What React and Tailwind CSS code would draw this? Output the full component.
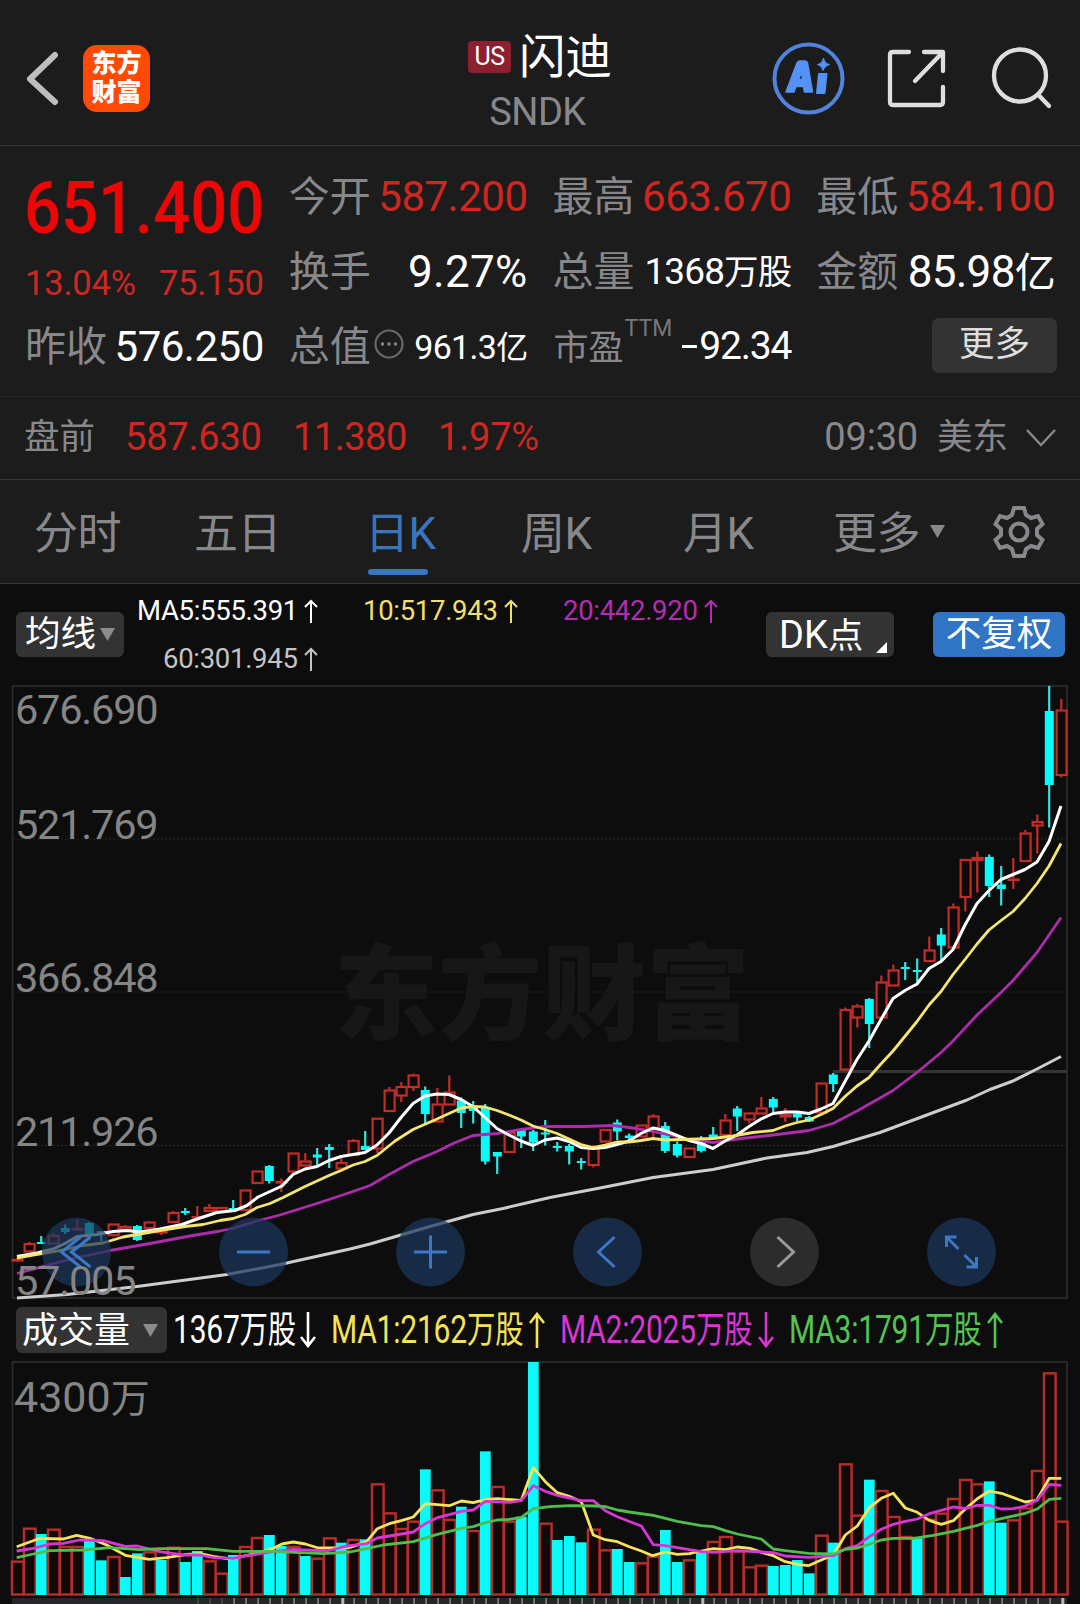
import React from 'react';

// [color, high, top, bottom, low] per trading day
const candles = [
  ['r', 1258, 1259, 1261, 1261], ['r', 1242, 1243, 1252, 1252], ['c', 1236, 1242, 1244, 1244], ['r', 1233, 1235, 1244, 1244],
  ['c', 1224.5, 1228, 1232, 1234], ['r', 1220, 1228, 1230, 1230], ['c', 1222, 1223, 1234, 1234], ['c', 1231, 1231, 1234, 1241],
  ['r', 1223.5, 1223.5, 1235.7, 1236], ['r', 1225, 1226, 1230, 1230], ['c', 1225, 1226, 1240, 1241], ['r', 1221, 1221.5, 1228.5, 1231],
  ['r', 1230, 1231, 1233, 1235], ['r', 1211, 1212, 1222.5, 1223], ['c', 1208, 1211, 1213, 1215], ['r', 1206, 1216, 1218, 1218],
  ['r', 1204, 1207, 1211.5, 1212], ['r', 1207, 1207, 1212, 1212], ['c', 1200, 1208, 1210, 1210], ['r', 1189.5, 1189.5, 1210.5, 1210.5],
  ['r', 1170.5, 1170.5, 1183.5, 1183.5], ['c', 1165, 1166, 1181, 1183.5], ['r', 1178.5, 1181, 1183, 1192], ['r', 1152.5, 1152.5, 1172, 1173],
  ['r', 1153, 1160.5, 1166, 1166], ['c', 1148, 1154.5, 1157.5, 1167], ['c', 1144, 1147, 1150, 1168], ['r', 1155, 1162, 1169, 1169],
  ['r', 1139, 1140, 1155.5, 1156], ['c', 1131, 1146, 1150, 1150], ['r', 1117.7, 1117.7, 1149, 1153], ['r', 1087, 1089.5, 1111.5, 1112],
  ['r', 1082, 1086, 1096, 1102], ['r', 1073.5, 1074.5, 1087.5, 1091], ['c', 1086.5, 1090, 1114, 1124], ['r', 1088, 1103.5, 1122, 1122],
  ['r', 1075.5, 1091.5, 1105, 1105], ['c', 1097.5, 1100.5, 1113, 1128], ['c', 1101, 1107, 1111, 1123.5], ['c', 1104, 1107, 1161.5, 1164.5],
  ['c', 1152, 1152, 1156.5, 1174], ['r', 1132, 1132, 1152.5, 1152.5], ['c', 1129, 1129, 1136.5, 1148], ['c', 1130, 1131.5, 1142.5, 1151],
  ['c', 1120, 1132.5, 1134.5, 1145.5], ['c', 1142, 1146, 1148, 1151.5], ['c', 1144, 1146, 1151.5, 1164.5], ['c', 1158, 1161, 1163, 1169.5],
  ['r', 1145, 1146, 1165.5, 1167.5], ['r', 1129, 1129, 1142, 1142], ['c', 1119.5, 1122.5, 1131.5, 1140], ['c', 1133.5, 1135.5, 1138, 1140],
  ['r', 1124.5, 1124.5, 1137, 1137], ['r', 1114, 1115.5, 1128.5, 1137], ['c', 1122, 1126, 1151, 1153], ['c', 1141.5, 1144, 1155.5, 1157.5],
  ['r', 1147.5, 1147.5, 1157.5, 1157.5], ['c', 1136, 1142, 1151, 1152.5], ['c', 1127, 1134.5, 1139, 1139], ['r', 1114, 1119.5, 1135.5, 1136],
  ['c', 1106, 1108.5, 1116.5, 1131], ['r', 1112, 1112.5, 1120, 1123.5], ['r', 1097, 1107.5, 1114, 1114], ['c', 1097, 1099, 1107.5, 1113],
  ['r', 1108, 1114, 1117, 1122], ['c', 1112, 1113.5, 1117.5, 1121], ['c', 1116, 1117, 1121.5, 1122], ['r', 1082.5, 1082.5, 1113, 1113],
  ['c', 1073, 1074.5, 1084, 1092], ['r', 1007.5, 1009, 1070, 1070], ['r', 1004, 1005.5, 1018, 1027.5], ['c', 998, 999, 1024, 1048],
  ['r', 975.5, 981.5, 1018, 1018], ['r', 964.5, 969.5, 986, 986], ['c', 962, 967, 969, 980], ['c', 958.5, 970, 972, 982],
  ['r', 936.5, 949.5, 961.5, 961.5], ['c', 928, 934.5, 945.5, 961], ['r', 903.5, 906.5, 948, 948], ['r', 859, 859, 897.5, 911.5],
  ['r', 851.5, 857, 860.5, 892.5], ['c', 854.5, 857, 886, 897], ['c', 866, 884.5, 889, 905.5], ['r', 858, 878.5, 880.5, 889],
  ['r', 830, 832.5, 861.5, 861.5], ['r', 814.5, 821, 826, 853.5], ['c', 686, 711, 785, 827.5], ['r', 699, 709.5, 775.5, 777.5],
];

const ma5 = '17,1256.5 37,1253 53,1249 65,1243.5 77,1236.5 97,1234.5 113,1231.5 127,1230.5 140,1232 160,1229 182,1224.5 200,1218 217,1212.5 235,1210.5 247,1205.5 258,1197 270,1191.5 282,1186 293,1174.5 305,1169 317,1166.5 329,1160.5 341,1156.5 353,1154.5 365,1152.5 377,1145 389,1133 401,1117.5 413,1103.5 425,1096 437,1094 449,1094.5 461,1099.5 473,1106.5 485,1117.5 497,1128.5 509,1135 521,1141 533,1145.5 545,1140 557,1138 569,1141.5 581,1147.5 593,1148.5 605,1147.5 617,1144.5 629,1141 641,1133.5 653,1128 665,1130.5 677,1135.5 689,1140.5 701,1143.5 713,1148.5 725,1141 737,1135 749,1126.5 761,1119 773,1113.5 785,1112 797,1112 809,1113.5 821,1109 833,1103.5 845,1081.5 857,1059.5 869,1041 881,1019.5 893,998.5 905,990.5 917,984 929,968.5 941,961.5 953,949.5 965,925 977,903.5 989,890.5 1001,879.5 1013,874.5 1025,869.5 1037,862 1049,841.5 1061,806';
const ma10 = '17,1258 33,1255 63,1250 83,1245.5 103,1243 123,1237 137,1234.5 160,1230.5 185,1226.5 203,1224.5 220,1220.5 233,1218.5 245,1214.5 257,1207.5 270,1203.5 283,1197.5 305,1186.5 329,1175.5 341,1170.5 353,1165 365,1161.5 377,1155.5 395,1141 413,1129.5 437,1119 461,1108 473,1106.5 485,1107 497,1110.5 509,1115 521,1120 533,1126 545,1129.5 557,1133.5 569,1139 581,1144.5 593,1147.5 605,1145 617,1142 629,1142 641,1140.5 653,1138.5 665,1140 713,1138.5 733,1136 753,1132.5 773,1130.5 785,1126 797,1122.5 809,1120 821,1114.5 833,1108.5 845,1096.5 857,1086 869,1077.5 880,1065 893,1051 917,1021.5 929,1005 941,991.5 953,974.5 965,959.5 977,944 989,930 1001,920.5 1013,911.5 1025,898.5 1037,883.5 1049,866 1061,843.5';
const ma20 = '17,1273.5 67,1260 110,1250.5 150,1243.5 190,1236 220,1231 233,1228.5 257,1221 280,1215 320,1202.5 350,1192.5 370,1185.5 389,1174.5 413,1161.5 437,1151.5 453,1143.5 473,1135.5 497,1133.5 521,1129.5 545,1126.5 583,1126.5 613,1125.5 633,1128 650,1131 665,1134 689,1139.5 713,1142.5 737,1139 773,1135 809,1130.5 833,1123.5 857,1111 880,1098 893,1090.5 917,1072.5 941,1052.5 953,1041 977,1015 1001,992.5 1013,980.5 1037,952.5 1061,917.5';
const ma60 = '17,1298 67,1294.5 137,1286.5 227,1274.5 280,1264.5 350,1249 370,1244 430,1226.5 473,1214.5 503,1208.5 550,1197.5 600,1188 653,1177.5 713,1169.5 767,1158 807,1152.5 833,1146.5 880,1132.5 967,1100 990,1089.5 1013,1081 1037,1069 1061,1056.5';

// volume bars: [color, top], the scale is 3 units per pixel and the base sits at 915
const volumes = [
  ['r', 812], ['r', 713], ['c', 732], ['r', 716], ['r', 768], ['r', 768], ['c', 752], ['c', 811], ['r', 798], ['c', 861], ['c', 790],
  ['r', 784], ['c', 810], ['r', 770], ['c', 816], ['c', 783], ['r', 811], ['r', 848], ['c', 795], ['r', 768], ['r', 741], ['c', 735],
  ['c', 768], ['r', 768], ['c', 798], ['r', 803], ['r', 742], ['c', 758], ['r', 747], ['c', 748], ['r', 580], ['r', 667], ['r', 714],
  ['r', 692], ['c', 538], ['r', 598], ['r', 687], ['c', 650], ['r', 720], ['c', 484], ['r', 588], ['r', 692], ['c', 680], ['c', 216],
  ['r', 698], ['c', 750], ['c', 738], ['c', 757], ['r', 716], ['r', 778], ['c', 777], ['c', 816], ['r', 817], ['r', 797], ['c', 720],
  ['c', 816], ['r', 808], ['c', 788], ['r', 753], ['r', 738], ['r', 782], ['r', 829], ['r', 824], ['c', 828], ['c', 825], ['c', 810],
  ['c', 850], ['r', 734], ['c', 758], ['r', 520], ['r', 674], ['c', 569], ['r', 600], ['r', 678], ['r', 738], ['c', 744], ['r', 686],
  ['r', 668], ['r', 624], ['r', 567], ['r', 580], ['c', 574], ['c', 698], ['r', 688], ['r', 652], ['r', 540], ['r', 247], ['r', 692],
];

// [start x, points] in the same units as the volume bars
const volMa1 = [
  [0, '50,770 120,745 190,747 230,736 270,745 320,765 376,796 448,808 500,803 560,793 600,791 640,799 690,807 770,790 820,775 846,762 880,756 916,762 955,774 1024,773'],
  [350, '0,772 50,755 82,716 118,701 154,692 190,681 226,641 298,647 334,633 370,638 406,629 442,626 514,631 550,533 586,575 622,608 658,619 694,635 730,735 766,749 802,755 838,770 874,783 908,797 946,786 982,793 1018,791'],
  [700, '4,783 40,776 76,779 112,771 150,775 184,787 220,797 256,815 292,823 325,827 364,810 400,795 436,735 472,708 508,653 544,625 580,610 616,654 652,667 688,691 724,703 760,692 796,657 832,626 868,603 904,610 976,636 1010,631 1048,565 1084,565'],
];
const volMa2 = [
  [0, '50,783 100,775 150,762 190,760 240,750 310,752 376,769 412,768 480,785 550,795 600,795 640,803 700,805 740,797 820,785 880,778 980,783 1024,772'],
  [350, '0,767 50,761 82,744 118,738 190,726 226,701 262,683 298,674 334,664 370,660 406,634 480,637 514,632 550,587 586,604 622,616 694,632 730,632 766,662 802,680 874,708 910,764 946,767 1018,779'],
  [700, '4,785 40,787 112,782 184,786 220,788 256,798 325,802 400,797 436,776 472,767 508,740 544,718 580,703 616,694 652,687 688,671 760,651 796,655 832,646 868,646 904,657 940,656 976,648 1012,630 1048,583 1084,586'],
];
const volMa3 = [
  [0, '50,803 100,792 150,782 250,780 330,773 420,779 480,776 620,776 700,784 820,784 900,788 970,791'],
  [350, '0,786 50,776 100,765 190,755 262,733 334,715 370,710 406,698 442,690 478,688 514,682 550,656 600,650 660,647 740,648 766,650 802,660 838,666 910,676 982,694'],
  [700, '4,707 40,710 76,722 112,732 184,747 220,777 256,782 325,790 400,792 436,778 472,774 508,763 544,750 580,745 640,745 700,736 760,724 832,706 868,694 904,686 976,670 1012,657 1048,628 1084,625'],
];

const toPoints = (parts) =>
  parts
    .map(([start, pts]) =>
      pts.split(' ').map((p) => {
        const [x, y] = p.split(',').map(Number);
        return `${(start + x / 3).toFixed(1)},${(y / 3).toFixed(1)}`;
      }).join(' ')
    )
    .join(' ');

const dayX = (i) => 17.3 + i * 12;

const Line = ({ points, color, width = 2.8 }) => (
  <polyline points={points} fill="none" stroke={color} strokeWidth={width} strokeLinejoin="round" />
);

const Header = () => (
  <header className="flex h-[146px] border-b border-[#363636]">
    <div className="flex w-[360px] items-start pl-[25px] pt-[45px]">
      <svg width="34" height="67" viewBox="0 0 34 67" fill="none" stroke="#bebebe" strokeWidth="6" strokeLinecap="round" strokeLinejoin="round">
        <path d="M30 10 L5 34 L30 57" />
      </svg>
      <div className="ml-[24px] flex h-[67px] w-[67px] flex-col items-center justify-center rounded-[14px] bg-[#ff4a05] text-[25px] font-black leading-[29px] text-white">
        <span className="-mt-px">东方</span>
        <span>财富</span>
      </div>
    </div>
    <div className="flex w-[360px] flex-col items-center pt-[32px]">
      <div className="flex items-center">
        <span className="-mt-px flex h-8 w-[43px] items-center justify-center rounded-[4px] bg-[#8c1f30] text-[25px] leading-none tracking-[-0.6px] text-white">US</span>
        <span className="ml-2 text-[46.5px] leading-[50px] text-white">闪迪</span>
      </div>
      <span className="mt-[11px] pr-[5px] text-[38px] leading-[38px] tracking-[-0.5px] text-[#88888c]">SNDK</span>
    </div>
    <div className="flex w-[360px] items-start pl-[52px] pt-[42px]">
      <svg width="73" height="74" viewBox="0 0 73 74" fill="none">
        <circle cx="36.5" cy="36.5" r="34" stroke="#5183dc" strokeWidth="4" />
        <path d="M14 50 L25 21 Q26 19 28 19 H33 Q35 19 35.500 21 L40.500 50 H32.500 L31.500 44.500 H24 L22 50 Z M26.500 37.500 H30.500 L29.500 30 Z" fill="#5592f5" fillRule="evenodd" stroke="#5592f5" strokeWidth="1.500" strokeLinejoin="round" />
        <path d="M47 32 H54.500 L52.500 51 H45 Z" fill="#5592f5" stroke="#5592f5" strokeWidth="2" strokeLinejoin="round" />
        <path d="M51.500 16 Q52.500 21.500 57.500 22.500 Q52.500 23.500 51 28.500 Q50 23.500 45.500 22.500 Q50.500 21.500 51.500 16 Z" fill="#5592f5" stroke="#5592f5" strokeWidth="1" />
      </svg>
      <svg className="ml-[40px] mt-[5px]" width="66" height="64" viewBox="0 0 66 64" fill="none" stroke="#dedede" strokeWidth="4.300" strokeLinecap="round" strokeLinejoin="round">
        <path d="M24 5 H8 Q5 5 5 8 V55 Q5 58 8 58 H55 Q58 58 58 55 V40" />
        <path d="M39 5 H58 V24 M57 6 L30 34" />
      </svg>
      <svg className="ml-[40px] mt-[3px]" width="64" height="66" viewBox="0 0 64 66" fill="none" stroke="#dedede" strokeWidth="4.300" strokeLinecap="round">
        <circle cx="29" cy="30.500" r="26" />
        <path d="M47.500 50 L58 61" />
      </svg>
    </div>
  </header>
);

const Stat = ({ label, children }) => (
  <div className="flex h-[75px] items-center justify-between whitespace-nowrap leading-none">
    <span className="-ml-[2px] mt-[2px] text-[41px] text-[#88888c]">{label}</span>
    {children}
  </div>
);

const Quote = () => (
  <section className="grid h-[251px] grid-cols-4 gap-x-[27px] border-b border-[#282828] pl-[27px] pr-[25px] pt-[13px] text-white">
    <div className="flex flex-col whitespace-nowrap leading-none">
      <div className="-ml-[3px] mt-[14px] h-[75px] w-0">
        <span className="inline-block origin-left scale-x-[0.905] text-[72px] font-medium text-[#ec0606]">651.400</span>
      </div>
      <div className="-ml-[2px] mt-[7px] flex h-[56px] items-center justify-between text-[34.5px] tracking-[-0.2px] text-[#cb2823]">
        <span>13.04%</span>
        <span>75.150</span>
      </div>
      <div className="-mt-[2px]">
        <Stat label="昨收"><span className="text-[42px] tracking-[-0.5px]">576.250</span></Stat>
      </div>
    </div>
    <div>
      <Stat label="今开"><span className="text-[42px] tracking-[-0.5px] text-[#cf2620]">587.200</span></Stat>
      <Stat label="换手"><span className="text-[44px] tracking-[0.3px]">9.27%</span></Stat>
      <div className="flex h-[75px] items-center whitespace-nowrap leading-none">
        <span className="-ml-[2px] mt-[2px] text-[41px] text-[#88888c]">总值</span>
        <svg className="-mt-[5px] ml-[3px]" width="30" height="30" viewBox="0 0 30 30">
          <circle cx="15" cy="15" r="13.500" fill="none" stroke="#68686a" strokeWidth="2.200" />
          <circle cx="8.500" cy="15" r="1.700" fill="#88888c" />
          <circle cx="15" cy="15" r="1.700" fill="#88888c" />
          <circle cx="21.500" cy="15" r="1.700" fill="#88888c" />
        </svg>
        <span className="ml-auto text-[34px] tracking-[-0.7px]">961.3<span className="text-[32px]">亿</span></span>
      </div>
    </div>
    <div>
      <Stat label="最高"><span className="text-[42px] tracking-[-0.5px] text-[#cf2620]">663.670</span></Stat>
      <Stat label="总量"><span className="text-[37px] tracking-[-0.9px]">1368<span className="text-[34.5px]">万股</span></span></Stat>
      <div className="flex h-[75px] items-center whitespace-nowrap leading-none">
        <span className="-ml-px mt-[3px] text-[35px] text-[#88888c]">市盈</span>
        <span className="-mt-[36px] ml-px text-[23px] text-[#77777a]">TTM</span>
        <span className="ml-auto flex items-center text-[39px] tracking-[-1.2px]">
          <span className="mr-[2px] h-[3px] w-[15px] bg-white" />92.34
        </span>
      </div>
    </div>
    <div>
      <Stat label="最低"><span className="text-[42px] tracking-[-0.5px] text-[#cf2620]">584.100</span></Stat>
      <Stat label="金额"><span className="text-[44px] tracking-[-0.7px]">85.98<span className="text-[41px]">亿</span></span></Stat>
      <div className="-mr-[2px] flex h-[72px] items-center justify-end">
        <button className="h-[55px] w-[125px] rounded-[7px] bg-[#333333] text-[35.5px] leading-none text-[#dedede]">更多</button>
      </div>
    </div>
  </section>
);

const PreMarket = () => (
  <section className="flex h-[83px] items-center border-b border-[#363636] pb-[2px] pl-[24px] pr-[23px] text-[38px] leading-none tracking-[-0.2px] text-[#cf2620]">
    <span className="mt-px w-[101px] text-[35.5px] tracking-normal text-[#88888c]">盘前</span>
    <span className="w-[168px]">587.630</span>
    <span className="w-[145px] tracking-[-0.5px]">11.380</span>
    <span>1.97%</span>
    <span className="ml-auto text-[#88888c]">09:30</span>
    <span className="ml-[19px] mt-px text-[35.5px] tracking-normal text-[#88888c]">美东</span>
    <svg className="ml-[17px] mt-px" width="32" height="20" viewBox="0 0 32 20" fill="none" stroke="#88888c" strokeWidth="2.500">
      <path d="M2 2 L16 17 L30 2" />
    </svg>
  </section>
);

const tabs = [
  { name: '分时', cls: 'w-[160px]' },
  { name: '五日', cls: 'w-[171px]' },
  { name: '日K', cls: 'w-[156px]', active: true },
  { name: '周K', cls: 'w-[162px]' },
  { name: '月K', cls: 'w-[150px]' },
];

const Tabs = () => (
  <nav className="flex h-[104px] items-start border-b border-[#363636] pl-[34px] text-[44px] leading-none tracking-[-0.4px] text-[#88888c]">
    {tabs.map((t) => (
      <div key={t.name} className={t.cls}>
        <div className={t.active ? 'mt-[32px] text-[#3a76bd]' : 'mt-[32px]'}>{t.name}</div>
        {t.active && <div className="ml-[3px] mt-[13px] h-[6px] w-[60px] rounded-full bg-[#3a76bd]" />}
      </div>
    ))}
    <div className="mt-[32px] flex w-[159px] items-center">
      更多
      <svg className="ml-[10px] mt-[-6px]" width="15" height="13" viewBox="0 0 15 13"><path d="M0 0 H15 L7.500 13 Z" fill="#88888c" /></svg>
    </div>
    <svg className="mt-[24px]" width="54" height="56" viewBox="-27 -28 54 56" fill="none" stroke="#88888c" strokeWidth="4" strokeLinejoin="miter">
      <path d="M-5 -24 H5 L7 -17 L12 -14 L19 -16 L23.500 -8 L18 -3 V3 L23.500 8 L19 16 L12 14 L7 17 L5 24 H-5 L-7 17 L-12 14 L-19 16 L-23.500 8 L-18 3 V-3 L-23.500 -8 L-19 -16 L-12 -14 L-7 -17 Z" />
      <circle r="8.500" />
    </svg>
  </nav>
);

const Arrow = ({ down, big }) => (
  <svg className={big ? 'h-[36px] w-[16px]' : 'h-[24px] w-[14px]'} viewBox={big ? '0 0 16 36' : '0 0 14 24'} fill="none" stroke="currentColor" strokeWidth={big ? 2.6 : 2}>
    {big ? (
      <path d={down ? 'M8 0 V34 M1 25 L8 34 L15 25' : 'M8 36 V2 M1 11 L8 2 L15 11'} />
    ) : (
      <path d="M7 24 V2 M1 8 L7 2 L13 8" />
    )}
  </svg>
);

const MaBar = () => (
  <div className="flex h-[101px] items-start pl-[16px] leading-none text-white">
    <button className="mt-[28px] flex h-[45px] w-[108px] items-center rounded-[6px] bg-[#333333] pl-[9px] text-[35.5px] leading-none">
      <span className="mt-px">均线</span>
      <svg className="ml-[4px]" width="15" height="13" viewBox="0 0 15 13"><path d="M0 0 H15 L7.500 13 Z" fill="#8c8c90" /></svg>
    </button>
    <div className="ml-[11px] flex w-[631px] flex-col pt-[14px] text-[27.5px] tracking-[-0.3px]">
      <div className="flex h-[26px] items-center">
        <span className="flex w-[228px] items-center gap-[6px] pl-[2px]">MA5:555.391<Arrow /></span>
        <span className="flex w-[200px] items-center gap-[6px] text-[#f0df6e]">10:517.943<Arrow /></span>
        <span className="flex items-center gap-[6px] text-[#b32db3]">20:442.920<Arrow /></span>
      </div>
      <div className="mt-[22px] flex h-[26px] items-center gap-[6px] pl-[28px] text-[#c4c4c4]">60:301.945<Arrow /></div>
    </div>
    <button className="mt-[28px] flex h-[45px] w-[128px] items-center rounded-[6px] bg-[#333333] pl-[13px] text-[35.5px] leading-none">
      <span className="mt-px whitespace-nowrap"><span className="text-[38px]">DK</span>点</span>
      <svg className="ml-auto mr-[7px] mt-[25px] shrink-0" width="11" height="11" viewBox="0 0 11 11"><path d="M11 0 V11 H0 Z" fill="#fff" /></svg>
    </button>
    <button className="ml-[39px] mt-[28px] flex h-[45px] w-[132px] items-center justify-center whitespace-nowrap rounded-[6px] bg-[#2f74c5] pt-px text-[35.5px] leading-none">不复权</button>
  </div>
);

const roundButtons = [
  <path d="M4 -15 L-15 0 L4 15 M14 -15 L-5 0 L14 15" />,
  <path d="M-16.500 0 H16.500" />,
  <path d="M-16.500 0 H16.500 M0 -16.500 V16.500" />,
  <path d="M7 -15 L-9 0 L7 15" />,
  <path d="M-7 -15 L9 0 L-7 15" />,
  <path d="M-15 -5 V-15 H-5 M-15 -15 L-3 -3 M15 5 V15 H5 M15 15 L3 3" />,
];

const PriceChart = () => (
  <div className="relative h-[615px]">
    <svg className="block" width="1080" height="615" viewBox="0 685 1080 615">
      <rect x="12.500" y="686" width="1054.500" height="612" fill="none" stroke="#272727" strokeWidth="2" />
      {[839, 992, 1145.5].map((y) => (
        <path key={y} d={`M13 ${y} H1067`} stroke="#2b2b2b" strokeWidth="1.200" strokeDasharray="2 2" />
      ))}
      <text x="334" y="1032" fontSize="104" fontWeight="900" fill="#171717">东方财富</text>
      <path d="M833 1071.500 H1067" stroke="#353535" strokeWidth="3" />
      {candles.map(([c, high, top, bottom, low], i) => {
        const x = dayX(i);
        if (c === 'c') {
          return (
            <g key={i} fill="#08fbf9">
              <rect x={x - 1.2} y={high} width="2.200" height={low - high} fill="#3fdedd" />
              <rect x={x - 4.5} y={top} width="9" height={Math.max(bottom - top, 2)} />
            </g>
          );
        }
        return (
          <g key={i} stroke="#c22d29" strokeWidth="2.200" fill="none">
            <path d={`M${x} ${high} V${top} M${x} ${bottom} V${low}`} />
            <rect x={x - 4.7} y={top + 1} width="10" height={Math.max(bottom - top - 1.5, 0.5)} fill="#110808" />
          </g>
        );
      })}
      <Line points={ma60} color="#cdcdcd" width={3} />
      <Line points={ma20} color="#ad2bad" />
      <Line points={ma5} color="#ffffff" width={3} />
      <Line points={ma10} color="#f5e66e" />
    </svg>
    <svg className="absolute left-0 top-0 overflow-visible" width="1080" height="615" viewBox="0 685 1080 615">
      {roundButtons.map((icon, i) => (
        <g key={i} transform={`translate(${76.5 + i * 177} 1252)`} fill="none" strokeWidth="3" stroke={i === 4 ? '#9b9b9b' : '#3c78c3'}>
          <circle r="34.500" stroke="none" fill={i === 4 ? '#2c2c2c' : '#1d375d'} fillOpacity={i === 4 ? 1 : 0.72} />
          {icon}
        </g>
      ))}
      <g fill="#858585" fontSize="41.500" letterSpacing="-1.200">
        <text x="15" y="724">676.690</text>
        <text x="15" y="839">521.769</text>
        <text x="15" y="992">366.848</text>
        <text x="15" y="1146">211.926</text>
        <text x="15" y="1295">57.005</text>
      </g>
    </svg>
  </div>
);

const VolItem = ({ text, down, cls }) => (
  <div className={cls}>
    <span className="inline-block w-0 origin-left scale-x-[0.77] whitespace-nowrap text-[39px] tracking-[-0.3px]">
      {text}<span className="text-[37px]">万股</span>
    </span>
    <Arrow down={down} big />
  </div>
);

const VolumeBar = () => (
  <div className="flex h-[60px] items-center pl-[16px] leading-none text-white">
    <button className="flex h-[46px] w-[151px] items-center rounded-[6px] bg-[#333333] pl-[6px] text-[36px] leading-none">
      <span className="mt-px whitespace-nowrap">成交量</span>
      <svg className="ml-auto mr-[9px]" width="15" height="13" viewBox="0 0 15 13"><path d="M0 0 H15 L7.500 13 Z" fill="#8c8c90" /></svg>
    </button>
    <VolItem text="1367" down cls="ml-[6px] flex w-[143px] items-center justify-between" />
    <VolItem text="MA1:2162" cls="ml-[15px] flex w-[214px] items-center justify-between text-[#f3e457]" />
    <VolItem text="MA2:2025" down cls="ml-[15px] flex w-[214px] items-center justify-between text-[#db35d4]" />
    <VolItem text="MA3:1791" cls="ml-[15px] flex w-[214px] items-center justify-between text-[#55c452]" />
  </div>
);

const VolumeChart = () => (
  <svg className="block" width="1080" height="244" viewBox="0 70 1080 244">
    <path d="M12.500 305 V72 H1067 V305" fill="none" stroke="#272727" strokeWidth="2" />
    <text x="14" y="122" fontSize="43" fill="#858585">4300<tspan fontSize="39">万</tspan></text>
    {volumes.map(([c, v], i) => {
      const x = dayX(i);
      const top = v / 3;
      return c === 'c' ? (
        <rect key={i} x={x - 5.3} y={top} width="10.700" height={305 - top} fill="#08fbf9" />
      ) : (
        <rect key={i} x={x - 5.3} y={top + 1} width="11.600" height={303.5 - top} fill="#120808" stroke="#b92d29" strokeWidth="2.400" />
      );
    })}
    <Line points={toPoints(volMa1)} color="#f6e45c" />
    <Line points={toPoints(volMa2)} color="#d934d6" />
    <Line points={toPoints(volMa3)} color="#4fbe4c" />
    <rect x="12" y="308" width="1055" height="6" fill="#262628" />
    {candles.map((_, i) =>
      i < 15 ? null : (
        <rect key={i} x={dayX(i)} y="308" width={i % 30 === 27 ? 3 : 1.6} height="6" fill={i < 18 ? '#4c4c4c' : i % 30 === 27 ? '#b5b5b5' : '#858585'} />
      )
    )}
  </svg>
);

export default function App() {
  return (
    <div className="h-[1604px] w-[1080px] overflow-hidden bg-[#0d0d0d] font-[Roboto,'Noto_Sans_CJK_SC',sans-serif]">
      <div className="bg-[#1c1c1c]">
        <Header />
        <Quote />
        <PreMarket />
        <Tabs />
      </div>
      <MaBar />
      <PriceChart />
      <VolumeBar />
      <VolumeChart />
    </div>
  );
}
